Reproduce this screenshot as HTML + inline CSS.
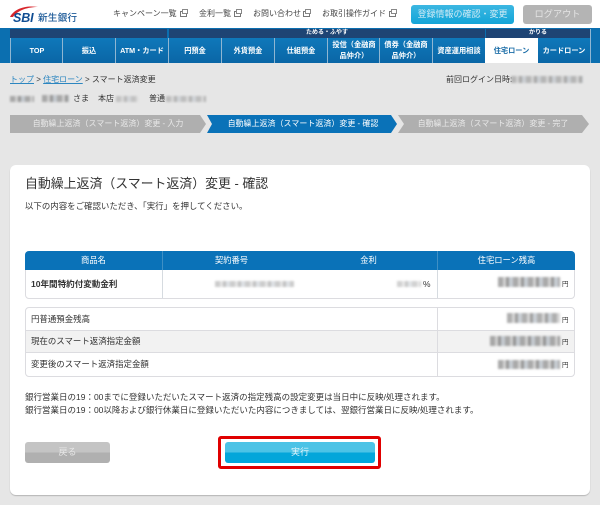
<!DOCTYPE html>
<html lang="ja"><head><meta charset="utf-8"><style>
html,body{margin:0;padding:0}
body{width:600px;height:505px;position:relative;overflow:hidden;background:#e6e6e6;font-family:"Liberation Sans","Noto Sans CJK JP",sans-serif;font-size:8px;color:#333}
div,span.a{position:absolute;box-sizing:border-box;white-space:nowrap}
.t{text-align:center;color:#fff;font-size:8.3px}
.tab{top:38px;height:25px;width:53px;border-left:1px solid #8fb6d2;background:linear-gradient(#0f78ba,#0a66a6);color:#fff;font-weight:700;font-size:7.2px;line-height:25px;text-align:center}
.tab.two{line-height:11px;padding-top:1px}
.lnk{top:8px;height:12px;line-height:12px;color:#444;font-size:8px}
.ic{top:11px;width:7px;height:6px;border:1px solid #777;background:#fff}
.ic:before{content:"";position:absolute;left:1px;top:-3px;width:6px;height:5px;border:1px solid #888;background:#fff;box-sizing:border-box}
.blur{filter:blur(1px);background:repeating-linear-gradient(90deg,#8d8d8d 0 5px,#c4c4c4 5px 8px,#777 8px 11px,#b5bcc4 11px 15px)}
.step{top:115px;height:18px;line-height:18px;color:#e8e8e8;font-size:8px;text-align:center}
.cell{font-size:8.45px;color:#333;line-height:12px}
.note{font-size:8.5px;color:#333;line-height:12px}
</style></head><body>
<div style="left:0;top:0;width:600px;height:28px;background:#fff"></div>
<svg style="position:absolute;left:9px;top:4px" width="40" height="20" viewBox="0 0 40 20"><path d="M1 13C5 5 16 1 29 3C19 3 9 6 4 13Z" fill="#d8262c"/></svg>
<div style="left:13px;top:13px;font:italic 700 12.5px/11px 'Liberation Sans',sans-serif;color:#0f4c92;letter-spacing:-.1px">SBI</div>
<div style="left:38px;top:8px;font-size:9.7px;line-height:22px;color:#1c5a98;font-weight:500;letter-spacing:.1px">新生銀行</div>

<div class="lnk" style="left:113px">キャンペーン一覧</div><div class="ic" style="left:180px"></div>
<div class="lnk" style="left:199px">金利一覧</div><div class="ic" style="left:234px"></div>
<div class="lnk" style="left:253px">お問い合わせ</div><div class="ic" style="left:303px"></div>
<div class="lnk" style="left:322px">お取引操作ガイド</div><div class="ic" style="left:389px"></div>
<div style="left:411px;top:5px;width:103px;height:19px;border-radius:3px;background:linear-gradient(#3cb7e2,#12a5d8);color:#cfeaf5;font-size:9px;line-height:18px;text-align:center">登録情報の確認・変更</div>
<div style="left:523px;top:5px;width:69px;height:19px;border-radius:3px;background:#b4b4b4;color:#e4e4e4;font-size:9.2px;line-height:18px;text-align:center">ログアウト</div>

<div style="left:0;top:28px;width:600px;height:35px;background:#0b6fb0"></div>
<div style="left:10px;top:29px;width:157px;height:9px;background:#1e4474"></div>
<div style="left:169px;top:29px;width:316px;height:9px;background:#1e4474;color:#fff;font-weight:700;font-size:6px;line-height:9px;padding-left:137px">ためる・ふやす</div>
<div style="left:486px;top:29px;width:104px;height:9px;background:#1e4474;color:#fff;font-weight:700;font-size:6px;line-height:9px;text-align:center">かりる</div>

<div class="tab" style="left:10px">TOP</div>
<div class="tab" style="left:62px">振込</div>
<div class="tab" style="left:115px">ATM・カード</div>
<div class="tab" style="left:168px">円預金</div>
<div class="tab" style="left:221px">外貨預金</div>
<div class="tab" style="left:274px">仕組預金</div>
<div class="tab two" style="left:327px">投信（金融商<br>品仲介）</div>
<div class="tab two" style="left:379px">債券（金融商<br>品仲介）</div>
<div class="tab" style="left:432px">資産運用相談</div>
<div class="tab" style="left:485px;background:#fff;color:#1c6ea8;border-left:0">住宅ローン</div>
<div class="tab" style="left:538px;width:52px;border-left:0">カードローン</div>
<div style="left:590px;top:29px;width:1px;height:34px;background:#8fb6d2"></div>

<div style="left:10px;top:74px;height:12px;line-height:12px;font-size:8px;color:#333"><span style="color:#2c86c0;text-decoration:underline">トップ</span> &gt; <span style="color:#2c86c0;text-decoration:underline">住宅ローン</span> &gt; スマート返済変更</div>
<div style="left:446px;top:74px;height:12px;line-height:12px;font-size:8px;color:#333">前回ログイン日時:</div>
<div class="blur" style="left:511px;top:76px;width:72px;height:7px;opacity:.55"></div>

<div class="blur" style="left:10px;top:96px;width:24px;height:6px;opacity:.7"></div>
<div class="blur" style="left:42px;top:95px;width:27px;height:7px;opacity:.7"></div>
<div style="left:73px;top:93px;height:12px;line-height:12px;font-size:8px">さま</div>
<div style="left:98px;top:93px;height:12px;line-height:12px;font-size:8px">本店</div>
<div class="blur" style="left:116px;top:96px;width:22px;height:6px;opacity:.4"></div>
<div style="left:149px;top:93px;height:12px;line-height:12px;font-size:8px">普通</div>
<div class="blur" style="left:166px;top:96px;width:40px;height:6px;opacity:.45"></div>

<svg style="position:absolute;left:0;top:115px" width="600" height="18"><path d="M10 0H200L206 9L200 18H10Z" fill="#afafaf"/><path d="M207 0H391L397 9L391 18H207L212 9Z" fill="#0a72b8"/><path d="M398 0H582L589 9L582 18H398L404 9Z" fill="#afafaf"/></svg>
<div class="step" style="left:13px;width:190px">自動繰上返済（スマート返済）変更 - 入力</div>
<div class="step" style="left:211px;width:184px;color:#fff">自動繰上返済（スマート返済）変更 - 確認</div>
<div class="step" style="left:401px;width:184px">自動繰上返済（スマート返済）変更 - 完了</div>

<div style="left:10px;top:165px;width:580px;height:330px;background:#fff;border-radius:6px;box-shadow:0 1px 1px #b5b5b5"></div>
<div style="left:25px;top:175px;height:18px;line-height:18px;font-size:12.9px;color:#333">自動繰上返済（スマート返済）変更 - 確認</div>
<div style="left:25px;top:200px;height:12px;line-height:12px;font-size:8.45px;color:#333">以下の内容をご確認いただき、「実行」を押してください。</div>

<div style="left:25px;top:251px;width:550px;height:48px;border:1px solid #dcdce0;border-radius:4px;background:#fff"></div>
<div style="left:25px;top:251px;width:550px;height:19px;background:#0a72b8;border-radius:4px 4px 0 0"></div>
<div style="left:162px;top:270px;width:1px;height:28px;background:#d6dbe0"></div>
<div style="left:437px;top:270px;width:1px;height:28px;background:#d6dbe0"></div>
<div style="left:162px;top:251px;width:1px;height:19px;background:#3f8fc4"></div>
<div style="left:437px;top:251px;width:1px;height:19px;background:#3f8fc4"></div>
<div class="t" style="left:25px;top:251px;width:137px;height:19px;line-height:19px">商品名</div>
<div class="t" style="left:163px;top:251px;width:137px;height:19px;line-height:19px">契約番号</div>
<div class="t" style="left:300px;top:251px;width:137px;height:19px;line-height:19px">金利</div>
<div class="t" style="left:438px;top:251px;width:137px;height:19px;line-height:19px">住宅ローン残高</div>
<div class="cell" style="left:31px;top:278px;font-weight:700;font-size:8.55px">10年間特約付変動金利</div>
<div class="blur" style="left:215px;top:281px;width:79px;height:6px;opacity:.45"></div>
<div class="blur" style="left:397px;top:281px;width:24px;height:6px;opacity:.4"></div>
<div class="cell" style="left:423px;top:278px">%</div>
<div class="blur" style="left:498px;top:277px;width:62px;height:10px;opacity:.75"></div>
<div class="cell" style="left:562px;top:279px;font-size:6.5px">円</div>

<div style="left:25px;top:307px;width:550px;height:70px;border:1px solid #dcdce0;border-radius:4px;background:#fff"></div>
<div style="left:26px;top:330px;width:548px;height:23px;background:#f2f2f2;border-top:1px solid #dcdce0;border-bottom:1px solid #dcdce0"></div>
<div style="left:437px;top:308px;width:1px;height:68px;background:#dcdce0"></div>
<div class="cell" style="left:31px;top:313px">円普通預金残高</div>
<div class="cell" style="left:31px;top:335px">現在のスマート返済指定金額</div>
<div class="cell" style="left:31px;top:358px">変更後のスマート返済指定金額</div>
<div class="blur" style="left:507px;top:313px;width:53px;height:10px;opacity:.7"></div>
<div class="cell" style="left:562px;top:315px;font-size:6.5px">円</div>
<div class="blur" style="left:490px;top:336px;width:70px;height:10px;opacity:.75"></div>
<div class="cell" style="left:562px;top:337px;font-size:6.5px">円</div>
<div class="blur" style="left:498px;top:360px;width:62px;height:9px;opacity:.75"></div>
<div class="cell" style="left:562px;top:360px;font-size:6.5px">円</div>

<div class="note" style="left:25px;top:391px">銀行営業日の19：00までに登録いただいたスマート返済の指定残高の設定変更は当日中に反映/処理されます。</div>
<div class="note" style="left:25px;top:404px">銀行営業日の19：00以降および銀行休業日に登録いただいた内容につきましては、翌銀行営業日に反映/処理されます。</div>

<div style="left:25px;top:442px;width:85px;height:21px;border-radius:3px;background:linear-gradient(#c4c4c4 50%,#b0b0b0 50%);color:#e8e8e8;font-size:9px;line-height:20px;text-align:center">戻る</div>
<div style="left:218px;top:436px;width:163px;height:33px;border:3.5px solid #e00000;border-radius:3px;background:#fff"></div>
<div style="left:225px;top:442px;width:150px;height:21px;border-radius:3px;background:linear-gradient(#4cc3e6 50%,#03a6da 50%);color:#e8f7fc;font-size:9px;line-height:20px;text-align:center">実行</div>
</body></html>
